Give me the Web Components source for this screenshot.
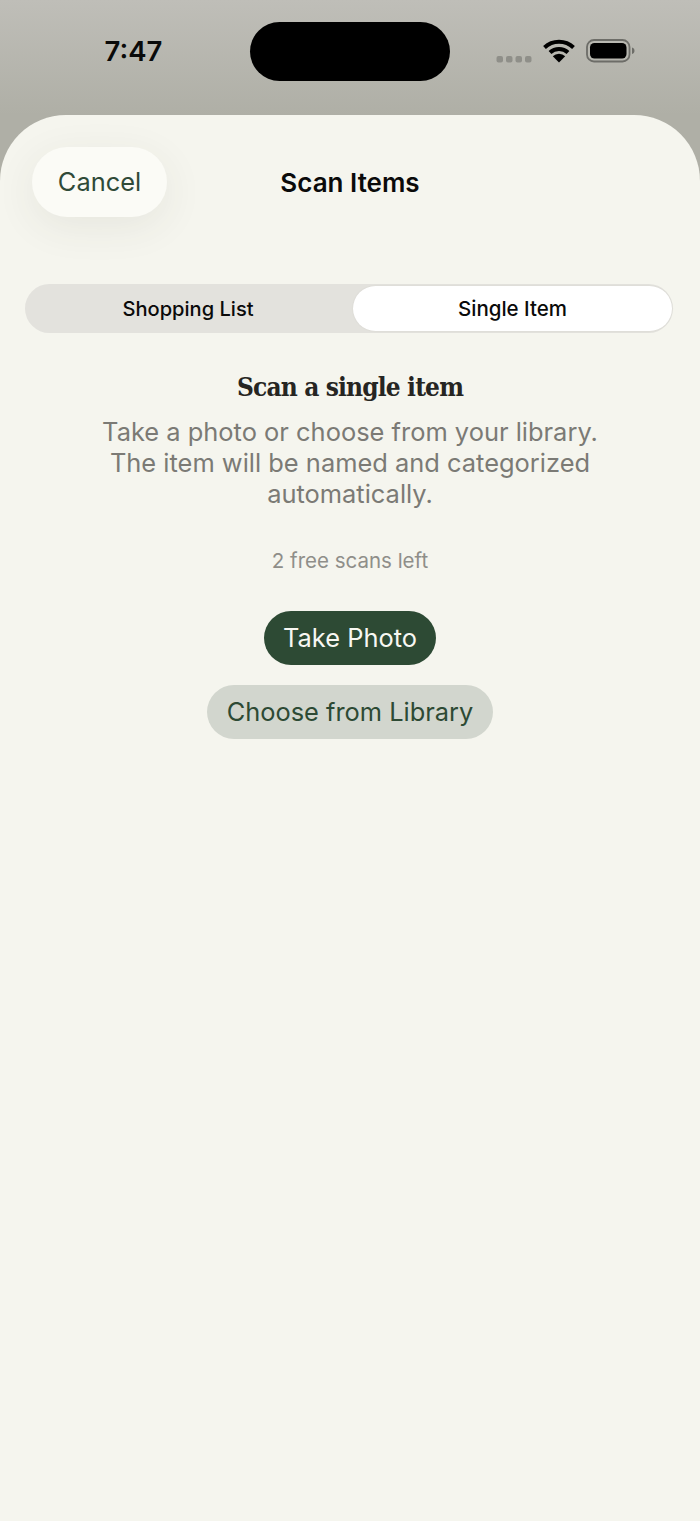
<!DOCTYPE html>
<html lang="en">
<head>
<meta charset="utf-8">
<title>Scan Items</title>
<style>
  html, body { margin: 0; padding: 0; background: #b4b4ab; }
  body { width: 700px; height: 1521px; overflow: hidden; font-family: Inter, "Liberation Sans", sans-serif; }
</style>
</head>
<body>
<scan-app>
  <status-bar slot="status" time="7:47"></status-bar>
  <scan-sheet slot="sheet">
    <sheet-header slot="header" title="Scan Items">Cancel</sheet-header>
    <segment-control slot="tabs" first="Shopping List" second="Single Item"></segment-control>
    <scan-panel slot="panel" heading="Scan a single item" count="2 free scans left">
      Take a photo or choose from your library.<br>The item will be named and categorized<br>automatically.
      <pill-button slot="actions" kind="primary">Take Photo</pill-button>
      <pill-button slot="actions" kind="secondary">Choose from Library</pill-button>
    </scan-panel>
  </scan-sheet>
</scan-app>

<script>
(function () {
  class ScanApp extends HTMLElement {
    constructor() {
      super();
      this.attachShadow({ mode: 'open' });
      this.shadowRoot.innerHTML = `
        <style>
          :host {
            display: flex;
            flex-direction: column;
            width: 700px;
            height: 1521px;
            background: linear-gradient(#bfbeb8, #afafa6 115px);
          }
        </style>
        <slot name="status"></slot>
        <slot name="sheet"></slot>
      `;
    }
  }

  class StatusBar extends HTMLElement {
    constructor() {
      super();
      this.attachShadow({ mode: 'open' });
      this.shadowRoot.innerHTML = `
        <style>
          :host {
            display: grid;
            grid-template-columns: 250px 200px 250px;
            height: 115px;
            box-sizing: border-box;
            padding-top: 22px;
            color: #0a0a0a;
          }
          .time {
            font: 600 27.500px/59px Inter, "Liberation Sans", sans-serif;
            text-align: center;
            padding-left: 17px;
            box-sizing: border-box;
          }
          .island { height: 59px; background: #000; border-radius: 29.5px; }
          .icons { display: flex; align-items: flex-start; padding: 18px 0 0 46px; }
          svg { display: block; }
        </style>
        <div class="time"></div>
        <div class="island"></div>
        <div class="icons">
          <svg width="36" height="14" viewBox="0 0 36 14" style="margin-top:15px">
            <g fill="#8f8f89">
              <rect x="0.500" y="1" width="6.500" height="6.500" rx="2"/>
              <rect x="10" y="1" width="6.500" height="6.500" rx="2"/>
              <rect x="19.500" y="1" width="6.500" height="6.500" rx="2"/>
              <rect x="29" y="1" width="6.500" height="6.500" rx="2"/>
            </g>
          </svg>
          <svg width="32" height="24" viewBox="0 0 32 24" style="margin-left:11px;margin-top:-1px">
            <path d="M1.500 8.500 A21 21 0 0 1 30.500 8.500" fill="none" stroke="#000" stroke-width="4"/>
            <path d="M7 13.500 A13 13 0 0 1 25 13.500" fill="none" stroke="#000" stroke-width="4"/>
            <path d="M16 23.500 L9.800 17.300 A8.800 8.800 0 0 1 22.200 17.300 Z" fill="#000"/>
          </svg>
          <svg width="50" height="24" viewBox="0 0 50 24" style="margin-left:11px;margin-top:-1px">
            <rect x="1" y="1" width="42.500" height="21.500" rx="7" fill="none" stroke="#6d6d68" stroke-width="1.800"/>
            <rect x="4" y="4" width="36.500" height="15.500" rx="4.500" fill="#000"/>
            <path d="M46 8.500 c1.800 .5 2.500 1.700 2.500 3.200 s-.7 2.700 -2.500 3.200 Z" fill="#6d6d68"/>
          </svg>
        </div>
      `;
      this.shadowRoot.querySelector('.time').textContent = this.getAttribute('time');
    }
  }

  class ScanSheet extends HTMLElement {
    constructor() {
      super();
      this.attachShadow({ mode: 'open' });
      this.shadowRoot.innerHTML = `
        <style>
          :host {
            display: flex;
            flex-direction: column;
            height: 1406px;
            background: #f5f5ee;
            border-radius: 66px 66px 0 0;
            box-sizing: border-box;
            padding-top: 32px;
          }
        </style>
        <slot name="header"></slot>
        <slot name="tabs"></slot>
        <slot name="panel"></slot>
      `;
    }
  }

  class SheetHeader extends HTMLElement {
    constructor() {
      super();
      this.attachShadow({ mode: 'open' });
      this.shadowRoot.innerHTML = `
        <style>
          :host {
            display: grid;
            grid-template-columns: 1fr auto 1fr;
            align-items: center;
            padding: 0 32px;
            height: 70px;
          }
          button {
            justify-self: start;
            width: 135px;
            height: 70px;
            padding: 0 0 1px;
            border: 0;
            border-radius: 35px;
            background: #fbfbf6;
            color: #2f4a38;
            font: 400 25.400px Inter, "Liberation Sans", sans-serif;
            box-shadow: 0 10px 40px rgba(60, 60, 50, 0.08);
          }
          h1 {
            margin: 0;
            font: 600 26px Inter, "Liberation Sans", sans-serif;
            color: #0a0a0a;
          }
        </style>
        <button><slot></slot></button>
        <h1></h1>
        <span></span>
      `;
      this.shadowRoot.querySelector('h1').textContent = this.getAttribute('title');
    }
  }

  class SegmentControl extends HTMLElement {
    constructor() {
      super();
      this.attachShadow({ mode: 'open' });
      this.shadowRoot.innerHTML = `
        <style>
          :host {
            display: grid;
            grid-template-columns: 326px 1fr;
            align-items: center;
            box-sizing: border-box;
            width: 648px;
            height: 49px;
            margin: 67px 0 0 25px;
            background: #e3e2dd;
            border-radius: 24.5px;
            font: 500 20.100px Inter, "Liberation Sans", sans-serif;
            color: #0a0a0a;
            text-align: center;
          }
          .on {
            margin: 0 1px 0 2px;
            height: 45px;
            line-height: 45px;
            background: #fff;
            border-radius: 22.5px;
            box-shadow: 0 0 2px rgba(60, 60, 50, 0.08);
            font-size: 20.500px;
          }
        </style>
        <div class="off"></div>
        <div class="on"></div>
      `;
      this.shadowRoot.querySelector('.off').textContent = this.getAttribute('first');
      this.shadowRoot.querySelector('.on').textContent = this.getAttribute('second');
    }
  }

  class ScanPanel extends HTMLElement {
    constructor() {
      super();
      this.attachShadow({ mode: 'open' });
      this.shadowRoot.innerHTML = `
        <style>
          :host {
            display: flex;
            flex-direction: column;
            align-items: center;
            text-align: center;
            padding-top: 37px;
          }
          h2 {
            margin: 0;
            font: 700 26px/34px "DejaVu Serif Condensed", "DejaVu Serif", serif;
            font-stretch: condensed;
            letter-spacing: -0.85px;
            color: #262522;
          }
          p {
            margin: 12px 0 0;
            font: 400 25.450px/31px Inter, "Liberation Sans", sans-serif;
            color: #7b7a75;
          }
          .count {
            margin-top: 36px;
            font: 400 20.500px/32px Inter, "Liberation Sans", sans-serif;
            color: #8f8e89;
          }
          .actions {
            display: flex;
            flex-direction: column;
            align-items: center;
            gap: 20px;
            margin-top: 34px;
          }
        </style>
        <h2></h2>
        <p><slot></slot></p>
        <div class="count"></div>
        <div class="actions"><slot name="actions"></slot></div>
      `;
      this.shadowRoot.querySelector('h2').textContent = this.getAttribute('heading');
      this.shadowRoot.querySelector('.count').textContent = this.getAttribute('count');
    }
  }

  class PillButton extends HTMLElement {
    constructor() {
      super();
      this.attachShadow({ mode: 'open' });
      this.shadowRoot.innerHTML = `
        <style>
          :host {
            display: block;
            height: 54px;
            padding: 0 19.500px;
            border-radius: 27px;
            font: 400 25.400px/54px Inter, "Liberation Sans", sans-serif;
          }
          :host([kind="primary"]) { background: #2d4a34; color: #f7f7f2; }
          :host([kind="secondary"]) { background: #d2d6ce; color: #2d4a34; }
        </style>
        <slot></slot>
      `;
    }
  }

  customElements.define('scan-app', ScanApp);
  customElements.define('status-bar', StatusBar);
  customElements.define('scan-sheet', ScanSheet);
  customElements.define('sheet-header', SheetHeader);
  customElements.define('segment-control', SegmentControl);
  customElements.define('scan-panel', ScanPanel);
  customElements.define('pill-button', PillButton);
}());
</script>
</body>
</html>
